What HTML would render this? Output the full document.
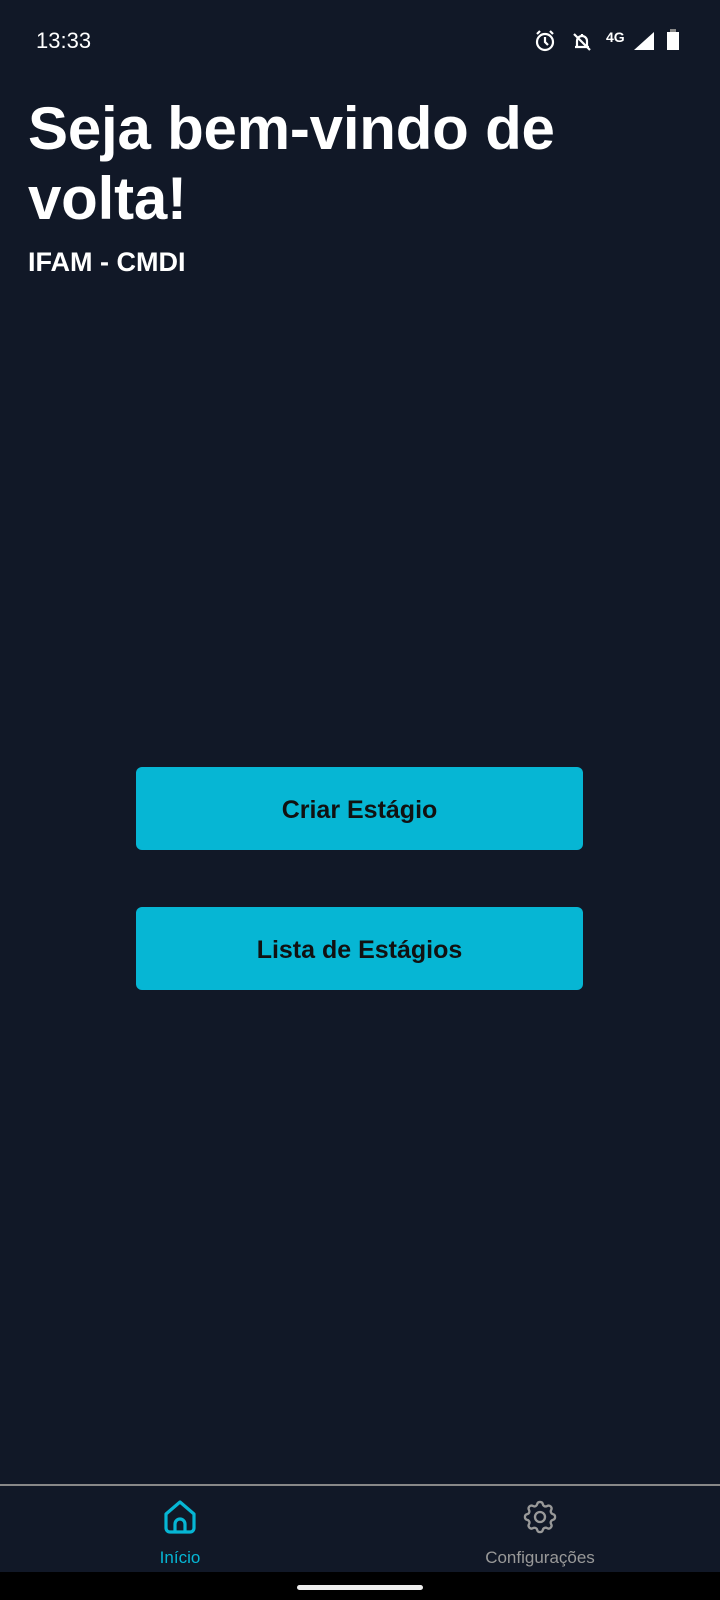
<!DOCTYPE html>
<html><head><meta charset="utf-8"><style>
body{margin:0;width:720px;height:1600px;background:#111827;font-family:"Liberation Sans",sans-serif;position:relative;overflow:hidden;color:#fff}
.a{position:absolute}
.btn{position:absolute;left:136px;width:447px;height:83px;background:#06B6D4;border-radius:6px;color:#111;font-size:25px;font-weight:bold;display:flex;align-items:center;justify-content:center;padding-top:3px;box-sizing:border-box}
</style></head><body>
<div class="a" style="left:36px;top:28px;font-size:22px">13:33</div>
<svg class="a" style="left:530px;top:26px" width="160" height="30" viewBox="0 0 160 30">
<g fill="none" stroke="#fff" stroke-width="2.2"><circle cx="15" cy="16" r="8"/><path d="M15 11v5l3 3M7 8l3-3M23 8l-3-3"/>
<path d="M45 21h14M47 21v-6a5 5 0 0 1 10 0v6M52 8v2M44 8l16 16"/></g>
<text x="76" y="16" font-size="14" font-weight="bold" fill="#fff" font-family="Liberation Sans">4G</text>
<path d="M104 24L124 6v18z" fill="#fff"/>
<rect x="137" y="6" width="12" height="18" fill="#fff"/><rect x="140" y="3" width="6" height="3" fill="#888"/>
</svg>
<div class="a" style="left:28px;top:94px;font-size:60px;font-weight:bold;line-height:70px;letter-spacing:-0.2px">Seja bem-vindo de<br>volta!</div>
<div class="a" style="left:28px;top:247px;font-size:27px;font-weight:bold">IFAM - CMDI</div>
<div class="btn" style="top:767px">Criar Estágio</div>
<div class="btn" style="top:907px">Lista de Estágios</div>
<div class="a" style="left:0;top:1484px;width:720px;height:2px;background:#888"></div>
<svg class="a" style="left:160px;top:1497px" width="40" height="40" viewBox="0 0 40 40"><path d="M6 17L20 5l14 12v14a4 4 0 0 1-4 4H10a4 4 0 0 1-4-4z M15 35v-8a5 5 0 0 1 10 0v8" fill="none" stroke="#06B6D4" stroke-width="3.2" stroke-linejoin="round"/></svg>
<div class="a" style="left:130px;width:100px;top:1548px;text-align:center;font-size:17px;color:#06B6D4">Início</div>
<svg class="a" style="left:520px;top:1497px" width="40" height="40" viewBox="0 0 24 24"><path fill="none" stroke="#999" stroke-width="1.4" d="M10.3 4.3c.4-1.8 3-1.8 3.4 0a1.7 1.7 0 0 0 2.6 1.1c1.5-.9 3.3.8 2.4 2.4a1.7 1.7 0 0 0 1 2.5c1.8.4 1.8 3 0 3.4a1.7 1.7 0 0 0-1 2.6c.9 1.5-.9 3.3-2.4 2.4a1.7 1.7 0 0 0-2.6 1c-.4 1.8-3 1.8-3.4 0a1.7 1.7 0 0 0-2.5-1c-1.6.9-3.3-.9-2.4-2.4a1.7 1.7 0 0 0-1.1-2.6c-1.8-.4-1.8-3 0-3.4a1.7 1.7 0 0 0 1.1-2.5c-.9-1.6.8-3.3 2.4-2.400a1.7 1.7 0 0 0 2.5-1.1z"/><circle cx="12" cy="12" r="3" fill="none" stroke="#999" stroke-width="1.4"/></svg>
<div class="a" style="left:440px;width:200px;top:1548px;text-align:center;font-size:17px;color:#999">Configurações</div>
<div class="a" style="left:0;top:1572px;width:720px;height:28px;background:#000"></div>
<div class="a" style="left:297px;top:1585px;width:126px;height:5px;border-radius:3px;background:#eee"></div>
</body></html>
